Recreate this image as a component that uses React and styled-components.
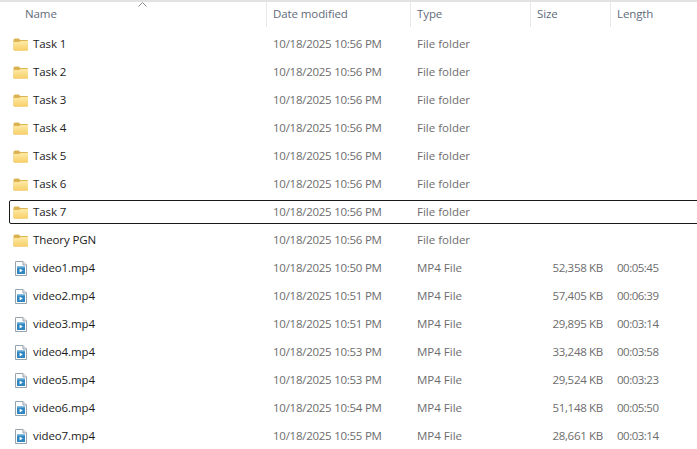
import React from 'react'
import styled, { createGlobalStyle } from 'styled-components'

const folders = ['Task 1', 'Task 2', 'Task 3', 'Task 4', 'Task 5', 'Task 6', 'Task 7', 'Theory PGN']

const videos = [
  ['video1.mp4', '10/18/2025 10:50 PM', '52,358 KB', '00:05:45'],
  ['video2.mp4', '10/18/2025 10:51 PM', '57,405 KB', '00:06:39'],
  ['video3.mp4', '10/18/2025 10:51 PM', '29,895 KB', '00:03:14'],
  ['video4.mp4', '10/18/2025 10:53 PM', '33,248 KB', '00:03:58'],
  ['video5.mp4', '10/18/2025 10:53 PM', '29,524 KB', '00:03:23'],
  ['video6.mp4', '10/18/2025 10:54 PM', '51,148 KB', '00:05:50'],
  ['video7.mp4', '10/18/2025 10:55 PM', '28,661 KB', '00:03:14'],
]

function FolderIcon() {
  return (
    <IconBox width="16" height="13" viewBox="0 0 16 13">
      <defs>
        <linearGradient id="folderFill" x1="0" y1="0" x2="0" y2="1">
          <stop offset="0" stopColor="#fdeaa6" />
          <stop offset="1" stopColor="#f8d06a" />
        </linearGradient>
      </defs>
      <path d="M0.5 2 Q0.5 0.5 2 0.5 H5.5 L7.5 2 H14 Q15 2 15 3 V11.5 Q15 12.5 14 12.5 H1.5 Q0.5 12.5 0.5 11.5 Z" fill="#dcb352" />
      <path d="M0.5 4 L6 4 L7.5 3 H15 V11.5 Q15 12.5 14 12.5 H1.5 Q0.5 12.5 0.5 11.5 Z" fill="url(#folderFill)" />
    </IconBox>
  )
}

function VideoIcon() {
  return (
    <IconBox width="12" height="15" viewBox="0 0 12 15">
      <path d="M0.5 0.5 H8 L11.5 4 V14.5 H0.5 Z" fill="#fff" stroke="#98a3ae" />
      <path d="M8 0.5 V4 H11.5" fill="#e4e8ec" stroke="#98a3ae" />
      <rect x="2" y="5" width="8" height="8" fill="#2f86c1" />
      <rect x="2" y="5" width="8" height="1.5" fill="#86bde0" />
      <path d="M4.6 7.6 L7.8 9.5 L4.6 11.4 Z" fill="#fff" />
    </IconBox>
  )
}

export default function App() {
  return (
    <>
      <GlobalStyle />
      <Explorer>
        <Header>
          <SortCaret width="9" height="5" viewBox="0 0 9 5">
            <path d="M0.5 4.5 L4.5 0.5 L8.5 4.5" fill="none" stroke="#8a8a8a" />
          </SortCaret>
          <HeaderCell $first>Name</HeaderCell>
          <HeaderCell>Date modified</HeaderCell>
          <HeaderCell>Type</HeaderCell>
          <HeaderCell>Size</HeaderCell>
          <HeaderCell>Length</HeaderCell>
        </Header>
        <List>
          {folders.map((name) => (
            <Row key={name} $focused={name === 'Task 7'}>
              <NameCell>
                <FolderIcon />
                <FileName>{name}</FileName>
              </NameCell>
              <DigitCell>10/18/2025 10:56 PM</DigitCell>
              <Cell>File folder</Cell>
              <Cell />
              <Cell />
            </Row>
          ))}
          {videos.map(([name, date, size, length]) => (
            <Row key={name}>
              <NameCell>
                <VideoSlot>
                  <VideoIcon />
                </VideoSlot>
                <FileName>{name}</FileName>
              </NameCell>
              <DigitCell>{date}</DigitCell>
              <Cell>MP4 File</Cell>
              <SizeCell>{size}</SizeCell>
              <LengthCell>{length}</LengthCell>
            </Row>
          ))}
        </List>
      </Explorer>
    </>
  )
}

const GlobalStyle = createGlobalStyle`
  html, body {
    margin: 0;
    background: #fff;
  }
`

const Explorer = styled.div`
  background: #fff;
  font-family: "Open Sans", "Noto Sans", sans-serif;
  font-size: 11.5px;
  height: 449px;
  overflow: hidden;
  width: 697px;
`

const Header = styled.div`
  border-top: 2px solid #e2e2e2;
  display: grid;
  grid-template-columns: 266px 144px 120px 80px 1fr;
  height: 25px;
  position: relative;
`

const SortCaret = styled.svg`
  left: 138px;
  position: absolute;
  top: 0;
`

const HeaderCell = styled.div`
  border-left: ${(p) => (p.$first ? 'none' : '1px solid #e8e8e8')};
  color: #5f6b7a;
  letter-spacing: -0.1px;
  line-height: 24px;
  padding-left: ${(p) => (p.$first ? '25px' : '6px')};
`

const List = styled.div`
  display: flex;
  flex-direction: column;
  gap: 4px;
  padding-top: 5px;
`

const Row = styled.div`
  align-items: center;
  border: 1px solid ${(p) => (p.$focused ? '#1a1a1a' : 'transparent')};
  border-radius: ${(p) => (p.$focused ? '2px' : '0')};
  box-sizing: border-box;
  display: grid;
  grid-template-columns: 258px 144px 120px 80px 1fr;
  height: 24px;
  margin-left: 9px;
  width: 700px;
`

const Cell = styled.div`
  color: #6d6d6d;
  padding-bottom: 2px;
  padding-left: 5px;
  white-space: nowrap;
`

const DigitCell = styled(Cell)`
  letter-spacing: -0.26px;
`

const LengthCell = styled(Cell)`
  letter-spacing: -0.5px;
`

const SizeCell = styled(Cell)`
  letter-spacing: -0.3px;
  padding-left: 0;
  padding-right: 9px;
  text-align: right;
`

const NameCell = styled.div`
  align-items: center;
  color: #1c1c1c;
  display: flex;
  gap: 4px;
  letter-spacing: -0.1px;
  padding-left: 3px;
`

const FileName = styled.span`
  padding-bottom: 2px;
`

const IconBox = styled.svg`
  display: block;
  flex: none;
`

const VideoSlot = styled.span`
  display: flex;
  justify-content: center;
  width: 16px;
`
